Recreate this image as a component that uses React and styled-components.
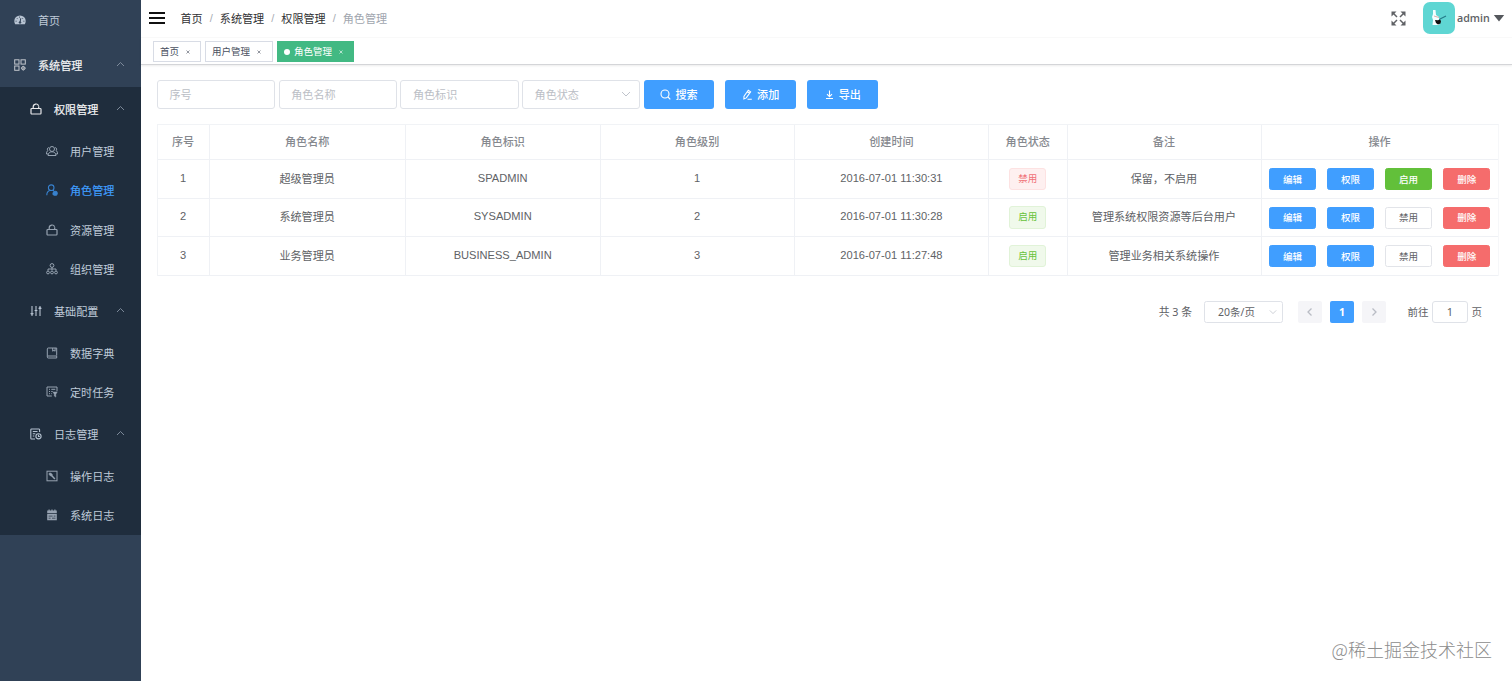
import React from 'react';
import styled, { createGlobalStyle, css } from 'styled-components';

const GlobalStyle = createGlobalStyle`
  *, *::before, *::after { box-sizing: border-box; }
  body {
    margin: 0;
    background: #fff;
    color: #606266;
    font-family: "Liberation Sans", "Noto Sans CJK SC", sans-serif;
    font-size: 11.1px;
    overflow: hidden;
  }
  button, input { font-family: inherit; }
`;

const Layout = styled.div`
  display: flex;
  height: 681px;
`;

const Sidebar = styled.nav`
  flex: 0 0 141px;
  background: #304156;
`;

const SubMenu = styled.div`
  background: #1f2d3d;
`;

const indent = { 1: 14, 2: 30, 3: 46 };
const heights = { 1: 44, 2: 44, 3: 39.5 };

const MenuItem = styled.div`
  display: flex;
  align-items: center;
  height: ${(p) => p.$height || heights[p.$level]}px;
  padding: 0 16px ${(p) => (p.$level === 1 && !p.$open ? 2 : 0)}px ${(p) => indent[p.$level]}px;
  color: ${(p) => (p.$active ? '#409eff' : p.$open ? '#f4f4f5' : '#bfcbd9')};
  ${(p) => p.$strong && css`-webkit-text-stroke: 0.2px currentColor;`}
`;

const MenuIcon = styled.svg`
  width: 12px;
  height: 12px;
  margin-right: 12px;
  opacity: ${(p) => (p.$dim ? 0.75 : 0.95)};
`;

const MenuLabel = styled.span`
  flex: 1;
  white-space: nowrap;
`;

const Arrow = styled.svg`
  width: 9px;
  height: 9px;
  fill: none;
  stroke: #8693a3;
  stroke-width: 0.9;
`;

const Main = styled.main`
  flex: 1;
  min-width: 0;
`;

const Header = styled.header`
  display: flex;
  align-items: center;
  height: 38px;
  padding: 0 8px 1px;
  border-bottom: 1px solid #fafafa;
`;

const Hamburger = styled.svg`
  width: 16px;
  height: 12px;
  margin: 0 15.5px 1px 0;
`;

const Breadcrumb = styled.div`
  display: flex;
  flex: 1;
  align-items: center;
`;

const Crumb = styled.span`
  color: ${(p) => (p.$current ? '#a0a5ae' : '#303133')};
`;

const Slash = styled.span`
  width: 17.1px;
  text-align: center;
  color: #a8acb4;
`;

const FullscreenIcon = styled.svg`
  width: 15px;
  height: 15px;
  margin-right: 16.5px;
`;

const Avatar = styled.svg`
  width: 32px;
  height: 32px;
`;

const UserName = styled.span`
  margin: 0 3px 0 2.5px;
  width: 33px;
  font: 600 10.7px "Open Sans", sans-serif;
  color: #606266;
`;

const Caret = styled.svg`
  width: 12px;
  height: 8px;
  margin-right: -1px;
`;

const TagsBar = styled.div`
  display: flex;
  gap: 4px;
  height: 27px;
  padding: 3px 12px 0;
  border-bottom: 1px solid #d4d5d8;
  box-shadow: 0 1px 2px rgba(0, 0, 0, 0.08);
`;

const PageTag = styled.div`
  display: flex;
  align-items: center;
  width: ${(p) => p.$width}px;
  height: 20.5px;
  padding: 0 6px;
  border: 1px solid ${(p) => (p.$active ? '#42b983' : '#d8dce5')};
  background: ${(p) => (p.$active ? '#42b983' : '#fff')};
  color: ${(p) => (p.$active ? '#fff' : '#495060')};
  font-size: 9.5px;
  white-space: nowrap;
`;

const Dot = styled.i`
  width: 6px;
  height: 6px;
  margin: 1px 4px 0 0;
  border-radius: 50%;
  background: #fff;
`;

const Close = styled.svg`
  width: 4px;
  height: 4px;
  margin: 1px 0 0 7px;
  stroke: currentColor;
  stroke-width: 0.6;
`;

const Content = styled.section`
  padding: 15px 13px 0 16px;
`;

const Filters = styled.div`
  display: flex;
  margin-bottom: 15px;
`;

const Field = styled.div`
  display: flex;
  align-items: center;
  justify-content: space-between;
  width: 118.2px;
  height: 29px;
  margin-right: 3.5px;
  padding: 0 8px 1px 11.5px;
  border: 1px solid #dfe2e8;
  border-radius: 3px;
  color: #bbbec5;
`;

const Chevron = styled.svg`
  width: ${(p) => p.$size || 10}px;
  height: ${(p) => p.$size || 10}px;
  fill: none;
  stroke: ${(p) => p.$stroke || '#c0c4cc'};
  stroke-width: ${(p) => (p.$stroke ? 1.3 : 1)};
`;

const ActionButton = styled.button`
  display: flex;
  align-items: center;
  justify-content: center;
  gap: 4px;
  width: 70.5px;
  height: 29px;
  margin-right: 11.2px;
  padding: 0 0 1px;
  border: 0;
  border-radius: 3px;
  background: #409eff;
  color: #fff;
  font-size: 11.1px;
  font-weight: 500;
`;

const ButtonIcon = styled.svg`
  width: 11px;
  height: 11px;
  fill: none;
  stroke: #fff;
  stroke-width: 1.1;
`;

const Table = styled.div`
  width: 1342px;
  border: 1px solid #f1f3f6;
  border-right-color: #f6f7f9;
  border-bottom: 0;
`;

const Row = styled.div`
  display: grid;
  grid-template-columns: 50.5px 196.8px 194.3px 194.4px 194.4px 78.3px 194px 1fr;
  height: ${(p) => (p.$head ? 35 : 38.6)}px;
  border-bottom: 1px solid #eff1f5;
  color: ${(p) => (p.$head ? '#85888e' : '#606266')};
  font-weight: ${(p) => (p.$head ? 500 : 400)};
`;

const Cell = styled.div`
  display: flex;
  align-items: center;
  justify-content: center;
  padding: 0 0.5px 2px 0;
  white-space: nowrap;
  & + & { border-left: 1px solid #eff1f5; }
`;

const Operations = styled(Cell)`
  justify-content: flex-start;
  gap: 10.6px;
  padding: 1px 0 0 7px;
`;

const tones = {
  primary: ['#409eff', '#409eff', '#fff'],
  success: ['#62c03a', '#62c03a', '#fff'],
  danger: ['#f56c6c', '#f56c6c', '#fff'],
  plain: ['#fff', '#e2e4e9', '#606266'],
};

const SmallButton = styled.button`
  width: 47.5px;
  height: 22px;
  padding: 1px 0 0;
  border: 1px solid ${(p) => tones[p.$tone][1]};
  border-radius: 2.5px;
  background: ${(p) => tones[p.$tone][0]};
  color: ${(p) => tones[p.$tone][2]};
  font-size: 9.5px;
  font-weight: ${(p) => (p.$tone === 'plain' ? 400 : 500)};
  line-height: 18px;
`;

const StatusTag = styled.span`
  width: 37px;
  height: 22.5px;
  margin-top: 2px;
  border: 1px solid ${(p) => (p.$on ? '#e1f3d8' : '#fde2e2')};
  border-radius: 3px;
  background: ${(p) => (p.$on ? '#f0f9eb' : '#fef0f0')};
  color: ${(p) => (p.$on ? '#67c23a' : '#f07078')};
  font-size: 9.5px;
  line-height: 20px;
  text-align: center;
`;

const Pagination = styled.div`
  display: flex;
  align-items: center;
  justify-content: flex-end;
  height: 23px;
  margin-top: 24.5px;
  padding-right: 17px;
  font-family: "Noto Sans", "Noto Sans CJK SC", sans-serif;
  font-size: 10.5px;
`;

const Total = styled.span`
  margin-right: 12px;
  font-size: 10.8px;
  padding-bottom: 1px;
`;

const PageSize = styled.div`
  display: flex;
  align-items: center;
  justify-content: space-between;
  width: 79px;
  height: 22.5px;
  margin-right: 15px;
  padding: 0 5px 0 13px;
  border: 1px solid #dfe2e8;
  border-radius: 2.5px;
`;

const PageButton = styled.button`
  display: flex;
  align-items: center;
  justify-content: center;
  width: 24px;
  height: 22px;
  margin-right: 7.8px;
  padding: 0;
  border: 0;
  border-radius: 2px;
  background: ${(p) => (p.$active ? '#409eff' : '#f5f5f8')};
  color: #fff;
  font-size: 10.5px;
  font-weight: 700;
`;

const Jump = styled.div`
  display: flex;
  align-items: center;
  gap: 3.5px;
  margin-left: 14px;
`;

const JumpInput = styled.span`
  width: 36px;
  height: 22.5px;
  border: 1px solid #dfe2e8;
  border-radius: 3px;
  font-size: 11px;
  line-height: 20px;
  text-align: center;
`;

const Watermark = styled.div`
  position: absolute;
  right: 20px;
  bottom: 19px;
  color: #8c8c8c;
  font: 300 18px/26px "Noto Sans CJK SC", sans-serif;
  white-space: nowrap;
`;

const line = { fill: 'none', stroke: 'currentColor', strokeWidth: 1 };

const icons = {
  dashboard: (
    <>
      <path fill="currentColor" d="M1.2 10.3A5.7 5.7 0 0 1 .3 7.1a5.7 5.7 0 0 1 11.4 0c0 1.2-.3 2.3-.9 3.2Z" />
      <g stroke="#304156" fill="#304156">
        <path d="m6 8.5.8-4.3" strokeWidth="1" />
        <circle cx="6" cy="8.5" r=".8" />
        <path d="M1.6 7.2h1M9.4 7.2h1M2.9 4.2l.7.7M5.5 2.6v1M9 4.1l-.6.7" strokeWidth=".9" />
      </g>
    </>
  ),
  grid: (
    <g {...line}>
      <rect x=".7" y=".8" width="4.3" height="4.3" /><rect x="7" y=".8" width="4.3" height="4.3" />
      <rect x=".7" y="7" width="4.3" height="4.3" /><circle cx="9.3" cy="9.2" r="1.7" />
      <path d="M9.3 6.8v4.8M6.9 9.2h4.8" strokeWidth=".6" />
    </g>
  ),
  lock: (
    <g {...line} strokeWidth="1.2">
      <rect x="1" y="5.5" width="10" height="5.5" rx="0.8" />
      <path d="M3.2 5.3V3.8a2.8 2.8 0 0 1 5.4-1M8.7 3.2v2.1" />
    </g>
  ),
  users: (
    <g {...line}>
      <circle cx="6" cy="4" r="2.5" />
      <path d="M2 10.5c0-5 8-5 8 0ZM2.8 2.5C1 3 1 5 2 5.6.8 6.2.4 7.3.5 9H2M9.2 2.5C11 3 11 5 10 5.6c1.2.6 1.6 1.7 1.5 3.4H10" />
    </g>
  ),
  role: (
    <g {...line} strokeWidth="1.1">
      <circle cx="5.2" cy="3.7" r="2.8" /><path d="M.8 11.2C.8 8.8 2 7.2 3.8 6.6M7 6.2l1 .7" />
      <circle cx="9.2" cy="9.2" r="2" fill="currentColor" /><path d="M6.4 10h2" />
    </g>
  ),
  org: (
    <g {...line}>
      <circle cx="6" cy="2.5" r="1.9" /><path d="M6 4.4v3M2 7.8V6h8v1.8" />
      <circle cx="2" cy="9.5" r="1.4" /><circle cx="6" cy="9.5" r="1.4" /><circle cx="10" cy="9.5" r="1.4" />
    </g>
  ),
  sliders: (
    <g {...line} strokeWidth="1.1">
      <path d="M2 1v10M6 1v10M10 1v10M.6 8.3 2 9.6l1.4-1.3M4.6 5.5h2.8M8.6 3.6 10 2.3l1.4 1.3" />
    </g>
  ),
  book: (
    <g {...line}>
      <path d="M10.7 8.6V1H2.3A1 1 0 0 0 1.3 2v8a1 1 0 0 0 1 1h8.4V9H2M6.7 1v3.2l1.2-.9 1.2.9V1" />
    </g>
  ),
  task: (
    <g {...line}>
      <path d="M5.8 10H1V1h10v4.3M3 3.3h1M5.3 3.3h4M3 5.5h1M5.3 5.5h1.4M3 7.7h1M5.3 7.7h.8" />
      <path d="M7 6h4.2L9.8 8.2v2.9L8.3 10V8.2Z" fill="currentColor" strokeWidth=".5" />
    </g>
  ),
  log: (
    <g {...line} strokeWidth="1.1">
      <path d="M5 11H1.5a.8.8 0 0 1-.7-.8V1.7A.8.8 0 0 1 1.5 1h7.3a.8.8 0 0 1 .8.7V4M2.8 3.5h4.7M2.8 5.7h2.5M2.8 8h1.5" />
      <circle cx="8.5" cy="8.3" r="2.6" /><path d="M8.5 6.7v1.8h1.3" />
    </g>
  ),
  tool: (
    <g {...line}>
      <rect x="1" y="1.2" width="10" height="9.6" />
      <path d="m5.3 5.2 3.6 3.7" strokeWidth="1.5" />
      <path d="M3 3.2 4.7 3l1.6 1.3-.2 1.5-1.5.3L3.2 4.7Z" fill="currentColor" strokeWidth=".5" />
    </g>
  ),
  calendar: (
    <>
      <path fill="currentColor" d="M1.2 1.6h1.3V.6h1.2v1h1.7V.6h1.2v1h1.7V.6h1.2v1h1.3v2.7H1.2ZM1.2 5h9.6v6.2H1.2Z" />
      <path stroke="#1f2d3d" strokeWidth=".7" d="M2.6 7.1h4M7.7 7.1h1.8M2.6 9.2h2M6 9.2h3.5" />
    </>
  ),
};

const permissionItems = [
  ['用户管理', 'users'], ['角色管理', 'role'], ['资源管理', 'lock'], ['组织管理', 'org'],
];

function Item({ level, label, icon, open, active, expandable, height }) {
  return (
    <MenuItem $level={level} $open={open} $active={active} $strong={open || active} $height={height}>
      <MenuIcon viewBox="0 0 12 12" $dim={level === 3 || icon === 'grid'}>{icons[icon]}</MenuIcon>
      <MenuLabel>{label}</MenuLabel>
      {expandable && <Arrow viewBox="0 0 9 9"><path d="M1 6 4.5 2.5 8 6" /></Arrow>}
    </MenuItem>
  );
}

const pageTags = [
  { label: '首页', width: 48 },
  { label: '用户管理', width: 68 },
  { label: '角色管理', width: 77, active: true },
];

const roles = [
  [1, '超级管理员', 'SPADMIN', 1, '2016-07-01 11:30:31', false, '保留，不启用'],
  [2, '系统管理员', 'SYSADMIN', 2, '2016-07-01 11:30:28', true, '管理系统权限资源等后台用户'],
  [3, '业务管理员', 'BUSINESS_ADMIN', 3, '2016-07-01 11:27:48', true, '管理业务相关系统操作'],
];

const headings = ['序号', '角色名称', '角色标识', '角色级别', '创建时间', '角色状态', '备注', '操作'];

export default function App() {
  return (
    <>
      <GlobalStyle />
      <Layout>
        <Sidebar>
          <Item level={1} label="首页" icon="dashboard" height={42.5} />
          <Item level={1} label="系统管理" icon="grid" open expandable height={44.2} />
          <SubMenu>
            <Item level={2} label="权限管理" icon="lock" open expandable height={44.3} />
            {permissionItems.map(([label, icon]) => (
              <Item key={label} level={3} label={label} icon={icon} active={icon === 'role'} />
            ))}
            <Item level={2} label="基础配置" icon="sliders" expandable />
            <Item level={3} label="数据字典" icon="book" />
            <Item level={3} label="定时任务" icon="task" />
            <Item level={2} label="日志管理" icon="log" expandable />
            <Item level={3} label="操作日志" icon="tool" />
            <Item level={3} label="系统日志" icon="calendar" />
          </SubMenu>
        </Sidebar>
        <Main>
          <Header>
            <Hamburger viewBox="0 0 16 12"><path d="M0 1h16M0 6h16M0 11h16" stroke="#111" strokeWidth="1.8" /></Hamburger>
            <Breadcrumb>
              {['首页', '系统管理', '权限管理'].map((name) => (
                <React.Fragment key={name}><Crumb>{name}</Crumb><Slash>/</Slash></React.Fragment>
              ))}
              <Crumb $current>角色管理</Crumb>
            </Breadcrumb>
            <FullscreenIcon viewBox="0 0 15 15">
              <g fill="#606266" stroke="#606266" strokeWidth="1.5">
                <path d="m2 2 4 4M13 2 9 6M13 13 9 9M2 13l4-4" />
                <path stroke="none" d="M.5.5h5l-5 5ZM14.5.5v5l-5-5ZM14.5 14.5h-5l5-5ZM.5 14.5v-5l5 5Z" />
              </g>
            </FullscreenIcon>
            <Avatar viewBox="0 0 32 32">
              <rect width="32" height="32" rx="7" fill="#5fd6d3" />
              <path d="M10 8h2.500l.5 5 3 2v3l1 2-1 3H9.500l.5-5-1-3 1-3Z" fill="#f5ffff" />
              <path d="m11 14 5 1.500" stroke="#d69a96" strokeWidth=".8" />
              <path d="m17 17 6-3" stroke="#247b88" strokeWidth="1.2" />
              <path d="m12 18 3 .3 2-1 1 2-.5 2.3-2.5 1-2-1.500Z" fill="#111" />
            </Avatar>
            <UserName>admin</UserName>
            <Caret viewBox="0 0 12 8"><path d="M.8 1h10.4L6 7.5Z" fill="#55585d" /></Caret>
          </Header>
          <TagsBar>
            {pageTags.map(({ label, width, active }) => (
              <PageTag key={label} $width={width} $active={active}>
                {active && <Dot />}{label}
                <Close viewBox="0 0 4 4"><path d="m.5.5 3 3M3.5.5l-3 3" /></Close>
              </PageTag>
            ))}
          </TagsBar>
          <Content>
            <Filters>
              <Field>序号</Field>
              <Field>角色名称</Field>
              <Field>角色标识</Field>
              <Field>角色状态<Chevron viewBox="0 0 10 10"><path d="m1 3 4 4 4-4" /></Chevron></Field>
              <ActionButton>
                <ButtonIcon viewBox="0 0 11 11"><circle cx="5" cy="5" r="4" /><path d="m8 8 2.3 2.3" /></ButtonIcon>搜索
              </ActionButton>
              <ActionButton>
                <ButtonIcon viewBox="0 0 11 11"><path d="M2 7.2 6.3 1.2 8.6 2.8 4.3 8.9 1.9 9.9ZM5.3 2.6l2.3 1.7M5.5 10.3h4.3" /></ButtonIcon>添加
              </ActionButton>
              <ActionButton>
                <ButtonIcon viewBox="0 0 11 11"><path d="M5.5 1.5v6M3 5.2l2.5 2.5L8 5.2M2 9.5h7" /></ButtonIcon>导出
              </ActionButton>
            </Filters>
            <Table>
              <Row $head>{headings.map((h) => <Cell key={h}>{h}</Cell>)}</Row>
              {roles.map(([id, name, code, level, time, enabled, note]) => (
                <Row key={id}>
                  <Cell>{id}</Cell>
                  <Cell>{name}</Cell>
                  <Cell>{code}</Cell>
                  <Cell>{level}</Cell>
                  <Cell>{time}</Cell>
                  <Cell><StatusTag $on={enabled}>{enabled ? '启用' : '禁用'}</StatusTag></Cell>
                  <Cell>{note}</Cell>
                  <Operations>
                    <SmallButton $tone="primary">编辑</SmallButton>
                    <SmallButton $tone="primary">权限</SmallButton>
                    <SmallButton $tone={enabled ? 'plain' : 'success'}>{enabled ? '禁用' : '启用'}</SmallButton>
                    <SmallButton $tone="danger">删除</SmallButton>
                  </Operations>
                </Row>
              ))}
            </Table>
            <Pagination>
              <Total>共 3 条</Total>
              <PageSize>20条/页<Chevron $size={8} viewBox="0 0 10 10"><path d="m1 3 4 4 4-4" /></Chevron></PageSize>
              <PageButton><Chevron $stroke="#b9bcc4" viewBox="0 0 10 10"><path d="M6.5 1.5 3 5l3.5 3.5" /></Chevron></PageButton>
              <PageButton $active>1</PageButton>
              <PageButton><Chevron $stroke="#b9bcc4" viewBox="0 0 10 10"><path d="M3.5 1.5 7 5 3.5 8.5" /></Chevron></PageButton>
              <Jump>前往<JumpInput>1</JumpInput>页</Jump>
            </Pagination>
          </Content>
        </Main>
        <Watermark>@稀土掘金技术社区</Watermark>
      </Layout>
    </>
  );
}
